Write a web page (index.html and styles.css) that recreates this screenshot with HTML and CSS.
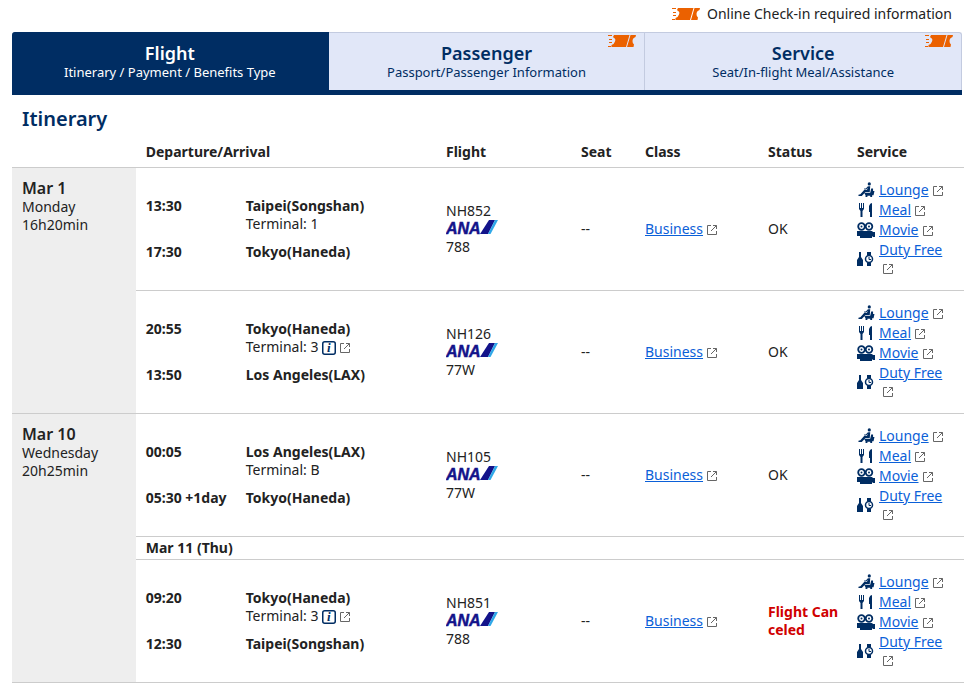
FILE: index.html
```html
<!DOCTYPE html>
<html lang="en">
<head>
  <meta charset="UTF-8">
  <meta name="viewport" content="width=device-width, initial-scale=1">
  <title>Itinerary</title>
  <link rel="stylesheet" href="styles.css">
</head>
<body>
  <svg class="sprite" aria-hidden="true">
    <symbol id="checkin" viewBox="0 0 28 12">
      <path d="M0 .5H4M1 4.500H4M1 7.500H4M0 11.500H3" stroke="#eb6100" fill="none"/>
      <path d="M6 0H21.500L18 12H3.500V10Q6 9.500 7 6.500T6 3L5 2Z" fill="#eb6100"/>
      <path d="M22.500 0H28L27.500 2Q24.500 3 24.500 6T26 9.500L25.500 12H19Z" fill="#eb6100"/>
    </symbol>
    <symbol id="ext" viewBox="0 0 11 11">
      <path d="M4 .5H.5V9.500H9.500V6M6 .5H9.500V4M9.500 .5L4 6" fill="none" stroke="#666"/>
    </symbol>
    <symbol id="lounge" viewBox="0 0 18 17">
      <circle cx="12.500" cy="2" r="1.700"/>
      <path d="M11.500 4.500H13.500L13 10.500H8.500L4.500 15H1V13.500L3 13L7 8.500H10Z"/>
      <path d="M11.500 5L9 7.500H7" fill="none" stroke="#002d63" stroke-width="1.200"/>
      <path d="M14.500 7H16.500V9.500H18L17 14H15.500V16H13.500V14.500H10.500V16H8.500V14L7 11.500H13.500Z"/>
    </symbol>
    <symbol id="meal" viewBox="0 0 18 16">
      <path d="M2 1h1v5h1V1h1v5h1V1h1v6L5.500 9v6h-2V9L2 7z"/>
      <path d="M12 4q1-3 3-3v14h-2v-5h-1z"/>
    </symbol>
    <symbol id="movie" viewBox="0 0 18 16">
      <circle cx="4.500" cy="4.500" r="3.300" fill="none" stroke="#002d63" stroke-width="1.800"/>
      <circle cx="12" cy="4.500" r="3.300" fill="none" stroke="#002d63" stroke-width="1.800"/>
      <circle cx="4.500" cy="4.500" r="1"/>
      <circle cx="12" cy="4.500" r="1"/>
      <path d="M0 9h15l1 1h2v5h-2l-1-1v2H3v-2H0z"/>
    </symbol>
    <symbol id="duty" viewBox="0 0 18 16">
      <path d="M2 1h2v5l2 3v6H0V9l2-3z"/>
      <path d="M10 1h4v3h-4zM10 12h4v3h-4z"/>
      <circle cx="12" cy="8" r="3.500" fill="#fff" stroke="#002d63" stroke-width="1.500"/>
      <path d="M12 6v2.500h2" fill="none" stroke="#002d63"/>
    </symbol>
    <symbol id="ana" viewBox="0 0 52 16">
      <text x="0" y="14" class="logo-text">ANA</text>
      <path d="M43 0H49L42 14H34Z" fill="#13138a"/>
      <path d="M49 0H52L44.500 14H42Z" fill="#2fa8e8"/>
    </symbol>
    <symbol id="info" viewBox="0 0 14 14">
      <rect x=".75" y=".75" width="12.500" height="12.500" rx="2" fill="#fff" stroke="#002d63" stroke-width="1.500"/>
      <text x="5" y="11" class="info-text">i</text>
    </symbol>
  </svg>

  <main>
    <p class="legend"><svg class="checkin"><use href="#checkin"/></svg>Online Check-in required information</p>

    <nav class="tabs">
      <a class="tab active" href="#"><strong>Flight</strong><span>Itinerary / Payment / Benefits Type</span></a>
      <a class="tab" href="#"><strong>Passenger</strong><span>Passport/Passenger Information</span><svg class="checkin"><use href="#checkin"/></svg></a>
      <a class="tab" href="#"><strong>Service</strong><span>Seat/In-flight Meal/Assistance</span><svg class="checkin"><use href="#checkin"/></svg></a>
    </nav>

    <h2>Itinerary</h2>

    <table class="itinerary">
      <colgroup>
        <col class="col-date"><col class="col-route"><col class="col-flight"><col class="col-seat"><col class="col-class"><col class="col-status"><col class="col-service">
      </colgroup>
      <thead>
        <tr>
          <td></td>
          <th scope="col">Departure/Arrival</th>
          <th scope="col">Flight</th>
          <th scope="col">Seat</th>
          <th scope="col">Class</th>
          <th scope="col">Status</th>
          <th scope="col">Service</th>
        </tr>
      </thead>
      <tbody>
        <tr>
          <th class="date" scope="rowgroup" rowspan="2"><strong>Mar 1</strong>Monday<br>16h20min</th>
          <td>
            <div class="route">
              <b>13:30</b><div><b>Taipei(Songshan)</b><br>Terminal: 1</div>
              <b>17:30</b><b>Tokyo(Haneda)</b>
            </div>
          </td>
          <td>NH852<svg class="ana" role="img" aria-label="ANA"><use href="#ana"/></svg>788</td>
          <td>--</td>
          <td><a href="#">Business</a><svg class="ext"><use href="#ext"/></svg></td>
          <td>OK</td>
          <td>
            <ul class="services">
              <li><svg class="icon"><use href="#lounge"/></svg><span><a href="#">Lounge</a><svg class="ext"><use href="#ext"/></svg></span></li>
              <li><svg class="icon"><use href="#meal"/></svg><span><a href="#">Meal</a><svg class="ext"><use href="#ext"/></svg></span></li>
              <li><svg class="icon"><use href="#movie"/></svg><span><a href="#">Movie</a><svg class="ext"><use href="#ext"/></svg></span></li>
              <li><svg class="icon"><use href="#duty"/></svg><span><a href="#">Duty Free</a> <svg class="ext"><use href="#ext"/></svg></span></li>
            </ul>
          </td>
        </tr>
        <tr>
          <td>
            <div class="route">
              <b>20:55</b><div><b>Tokyo(Haneda)</b><br>Terminal: 3 <svg class="info"><use href="#info"/></svg><svg class="ext"><use href="#ext"/></svg></div>
              <b>13:50</b><b>Los Angeles(LAX)</b>
            </div>
          </td>
          <td>NH126<svg class="ana" role="img" aria-label="ANA"><use href="#ana"/></svg>77W</td>
          <td>--</td>
          <td><a href="#">Business</a><svg class="ext"><use href="#ext"/></svg></td>
          <td>OK</td>
          <td>
            <ul class="services">
              <li><svg class="icon"><use href="#lounge"/></svg><span><a href="#">Lounge</a><svg class="ext"><use href="#ext"/></svg></span></li>
              <li><svg class="icon"><use href="#meal"/></svg><span><a href="#">Meal</a><svg class="ext"><use href="#ext"/></svg></span></li>
              <li><svg class="icon"><use href="#movie"/></svg><span><a href="#">Movie</a><svg class="ext"><use href="#ext"/></svg></span></li>
              <li><svg class="icon"><use href="#duty"/></svg><span><a href="#">Duty Free</a> <svg class="ext"><use href="#ext"/></svg></span></li>
            </ul>
          </td>
        </tr>
      </tbody>
      <tbody>
        <tr>
          <th class="date" scope="rowgroup" rowspan="3"><strong>Mar 10</strong>Wednesday<br>20h25min</th>
          <td>
            <div class="route">
              <b>00:05</b><div><b>Los Angeles(LAX)</b><br>Terminal: B</div>
              <b>05:30 +1day</b><b>Tokyo(Haneda)</b>
            </div>
          </td>
          <td>NH105<svg class="ana" role="img" aria-label="ANA"><use href="#ana"/></svg>77W</td>
          <td>--</td>
          <td><a href="#">Business</a><svg class="ext"><use href="#ext"/></svg></td>
          <td>OK</td>
          <td>
            <ul class="services">
              <li><svg class="icon"><use href="#lounge"/></svg><span><a href="#">Lounge</a><svg class="ext"><use href="#ext"/></svg></span></li>
              <li><svg class="icon"><use href="#meal"/></svg><span><a href="#">Meal</a><svg class="ext"><use href="#ext"/></svg></span></li>
              <li><svg class="icon"><use href="#movie"/></svg><span><a href="#">Movie</a><svg class="ext"><use href="#ext"/></svg></span></li>
              <li><svg class="icon"><use href="#duty"/></svg><span><a href="#">Duty Free</a> <svg class="ext"><use href="#ext"/></svg></span></li>
            </ul>
          </td>
        </tr>
        <tr class="day-change">
          <th colspan="6">Mar 11 (Thu)</th>
        </tr>
        <tr>
          <td>
            <div class="route">
              <b>09:20</b><div><b>Tokyo(Haneda)</b><br>Terminal: 3 <svg class="info"><use href="#info"/></svg><svg class="ext"><use href="#ext"/></svg></div>
              <b>12:30</b><b>Taipei(Songshan)</b>
            </div>
          </td>
          <td>NH851<svg class="ana" role="img" aria-label="ANA"><use href="#ana"/></svg>788</td>
          <td>--</td>
          <td><a href="#">Business</a><svg class="ext"><use href="#ext"/></svg></td>
          <td class="canceled">Flight Can<br>celed</td>
          <td>
            <ul class="services">
              <li><svg class="icon"><use href="#lounge"/></svg><span><a href="#">Lounge</a><svg class="ext"><use href="#ext"/></svg></span></li>
              <li><svg class="icon"><use href="#meal"/></svg><span><a href="#">Meal</a><svg class="ext"><use href="#ext"/></svg></span></li>
              <li><svg class="icon"><use href="#movie"/></svg><span><a href="#">Movie</a><svg class="ext"><use href="#ext"/></svg></span></li>
              <li><svg class="icon"><use href="#duty"/></svg><span><a href="#">Duty Free</a> <svg class="ext"><use href="#ext"/></svg></span></li>
            </ul>
          </td>
        </tr>
      </tbody>
    </table>
  </main>
</body>
</html>
```

FILE: styles.css
```css
* {
  box-sizing: border-box;
}

body {
  margin: 0;
  font-family: "Noto Sans", "Open Sans", sans-serif;
  font-size: 14px;
  line-height: 18px;
  color: #222;
  background: #fff;
}

main {
  padding: 5px 13px 0 12px;
}

.sprite {
  display: none;
}

b, th {
  font-weight: 700;
}

strong {
  font-weight: 600;
}

a {
  color: #0b60d8;
}

/* top legend */
.legend {
  display: flex;
  justify-content: flex-end;
  align-items: center;
  gap: 7px;
  margin: 0 12px 9px 0;
}

.checkin {
  width: 28px;
  height: 12px;
}

/* tabs */
.tabs {
  display: flex;
  margin-right: 2px;
  border-bottom: 5px solid #002d63;
}

.tab {
  position: relative;
  flex: 1;
  display: flex;
  flex-direction: column;
  align-items: center;
  padding: 9px 0 10px;
  border: solid #c3cbe0;
  border-width: 1px 1px 0 0;
  background: #e1e7f8;
  color: #002d63;
  text-decoration: none;
}

.tab:first-child {
  border-top-left-radius: 3px;
}

.tab:last-child {
  border-top-right-radius: 3px;
}

.tab.active {
  background: #002d63;
  border-color: #002d63;
  color: #fff;
}

.tab strong {
  font-size: 18px;
  line-height: 22px;
}

.tab span {
  font-size: 13px;
  line-height: 16px;
}

.tab .checkin {
  position: absolute;
  top: 2px;
  right: 8px;
}

h2 {
  margin: 12px 10px;
  font-size: 20px;
  line-height: 24px;
  font-weight: 600;
  color: #002d63;
}

/* itinerary table */
.itinerary {
  width: 100%;
  table-layout: fixed;
  border-collapse: separate;
  border-spacing: 0;
}

.col-date { width: 13%; }
.col-flight { width: 135px; }
.col-seat { width: 64px; }
.col-class { width: 123px; }
.col-status { width: 89px; }
.col-service { width: 117px; }

.itinerary th,
.itinerary td {
  padding: 13px 10px;
  border-bottom: 1px solid #ccc;
  text-align: left;
  vertical-align: middle;
}

.itinerary thead th,
.itinerary thead td {
  padding: 0 10px 6px;
}

.itinerary .date {
  padding: 10px;
  background: #eee;
  font-weight: 400;
  vertical-align: top;
}

.date strong {
  display: block;
  font-size: 16px;
  line-height: 20px;
}

.itinerary .day-change th {
  padding: 2px 10px;
}

.itinerary .canceled {
  color: #d00000;
  font-weight: 700;
  white-space: nowrap;
}

.route {
  display: grid;
  grid-template-columns: 100px 1fr;
  row-gap: 10px;
}

.ana {
  display: block;
  width: 52px;
  height: 16px;
  margin-bottom: 2px;
}

.logo-text {
  font: italic bold 16px "Liberation Sans", sans-serif;
  fill: #13138a;
  stroke: #13138a;
  stroke-width: .5px;
}

.info {
  width: 14px;
  height: 14px;
  vertical-align: -3px;
}

.info-text {
  font: italic bold 13px "Liberation Serif", serif;
  fill: #002d63;
}

.ext {
  width: 11px;
  height: 11px;
  margin-left: 4px;
  vertical-align: -2px;
}

.services {
  display: grid;
  gap: 2px;
  margin: 0;
  padding: 0;
  list-style: none;
}

.services li {
  display: flex;
  align-items: center;
  gap: 4px;
}

.services span {
  flex: 1;
}

.icon {
  width: 18px;
  height: 16px;
  fill: #002d63;
}
```
